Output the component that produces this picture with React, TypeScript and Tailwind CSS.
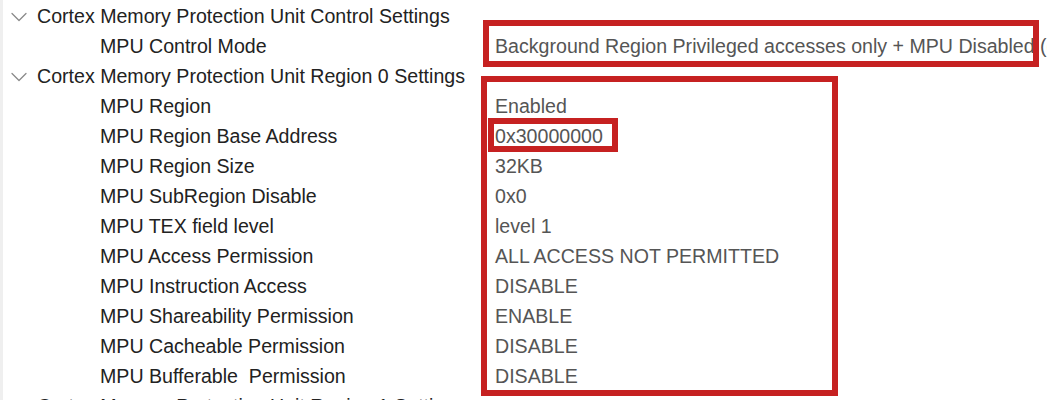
import { ChevronDown } from "lucide-react";

type Row = { label: string; value?: string; group?: boolean };

const rows: Row[] = [
  { label: "Cortex Memory Protection Unit Control Settings", group: true },
  { label: "MPU Control Mode", value: "Background Region Privileged accesses only + MPU Disabled (default setting)" },
  { label: "Cortex Memory Protection Unit Region 0 Settings", group: true },
  { label: "MPU Region", value: "Enabled" },
  { label: "MPU Region Base Address", value: "0x30000000" },
  { label: "MPU Region Size", value: "32KB" },
  { label: "MPU SubRegion Disable", value: "0x0" },
  { label: "MPU TEX field level", value: "level 1" },
  { label: "MPU Access Permission", value: "ALL ACCESS NOT PERMITTED" },
  { label: "MPU Instruction Access", value: "DISABLE" },
  { label: "MPU Shareability Permission", value: "ENABLE" },
  { label: "MPU Cacheable Permission", value: "DISABLE" },
  { label: "MPU Bufferable  Permission", value: "DISABLE" },
  { label: "Cortex Memory Protection Unit Region 1 Settings", group: true },
];

export default function App() {
  return (
    <div
      className="relative h-[400px] w-[1047px] overflow-hidden bg-white"
      style={{ fontFamily: '"Liberation Sans", Arial, sans-serif' }}
    >
      <div className="flex h-full">
        <div className="w-[3px] shrink-0 bg-[#efefef]" />
        <div className="flex-1 pt-[2px]">
          {rows.map((row) => (
            <div key={row.label} className="flex h-[30px] items-center whitespace-pre text-[19.6px]">
              {row.group ? (
                <div className="flex items-center text-[#222222]">
                  <ChevronDown size={28} strokeWidth={1.1} className="ml-[2px] mr-[4px] shrink-0 text-[#8a8a8a]" />
                  <span>{row.label}</span>
                </div>
              ) : (
                <>
                  <span className="w-[492px] shrink-0 pl-[97px] text-[#222222]">{row.label}</span>
                  <span className="text-[#555555]">{row.value}</span>
                </>
              )}
            </div>
          ))}
        </div>
      </div>

      {/* red annotation boxes */}
      <div className="pointer-events-none absolute left-[483px] top-[20px] h-[47px] w-[556px] border-[6px] border-[#c62121]" />
      <div className="pointer-events-none absolute left-[481px] top-[76px] h-[320px] w-[357px] border-[6px] border-[#c62121]" />
      <div className="pointer-events-none absolute left-[488px] top-[118px] h-[34px] w-[130px] border-[6px] border-[#c62121]" />
    </div>
  );
}
